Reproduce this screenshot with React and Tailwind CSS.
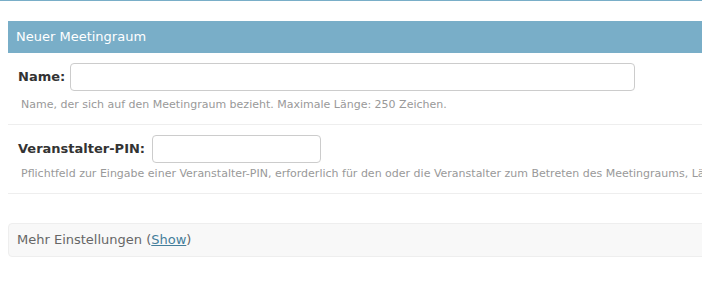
export default function App() {
  return (
    <div
      className="w-[702px] h-[281px] overflow-hidden bg-white border-t border-[#79aec8]"
      style={{ fontFamily: '"DejaVu Sans", Verdana, sans-serif' }}
    >
      <div className="ml-[8px] mt-[20px] w-[720px]">
        <h2 className="h-[32px] bg-[#79aec8] text-white text-[13px] pl-[8px] flex items-center">
          Neuer Meetingraum
        </h2>
        <div className="border-b border-[#eee] pt-[10px] pb-[11px] pl-[10px]">
          <div className="flex items-center gap-[5px]">
            <label className="text-[13px] font-bold text-[#333]">Name:</label>
            <input
              type="text"
              className="w-[565px] h-[28px] border border-[#ccc] rounded-[4px] bg-white"
            />
          </div>
          <p className="mt-[6px] ml-[3px] text-[11px] text-[#999] leading-[16px]">
            Name, der sich auf den Meetingraum bezieht. Maximale Länge: 250 Zeichen.
          </p>
        </div>
        <div className="border-b border-[#eee] pt-[10px] pb-[11px] pl-[10px]">
          <div className="flex items-center gap-[7px]">
            <label className="text-[13px] font-bold text-[#333]">Veranstalter-PIN:</label>
            <input
              type="text"
              className="w-[169px] h-[28px] border border-[#ccc] rounded-[4px] bg-white"
            />
          </div>
          <p className="mt-[3px] ml-[3px] text-[11px] text-[#999] leading-[16px] whitespace-nowrap">
            Pflichtfeld zur Eingabe einer Veranstalter-PIN, erforderlich für den oder die Veranstalter zum Betreten des Meetingraums, Länge 4-10 Ziffern.
          </p>
        </div>
        <div className="mt-[29px] h-[34px] bg-[#f8f8f8] border border-[#eee] rounded-[4px] flex items-center pl-[8px] text-[13px] text-[#666]">
          Mehr Einstellungen (
          <a href="#" className="text-[#447e9b] underline">
            Show
          </a>
          )
        </div>
      </div>
    </div>
  );
}
